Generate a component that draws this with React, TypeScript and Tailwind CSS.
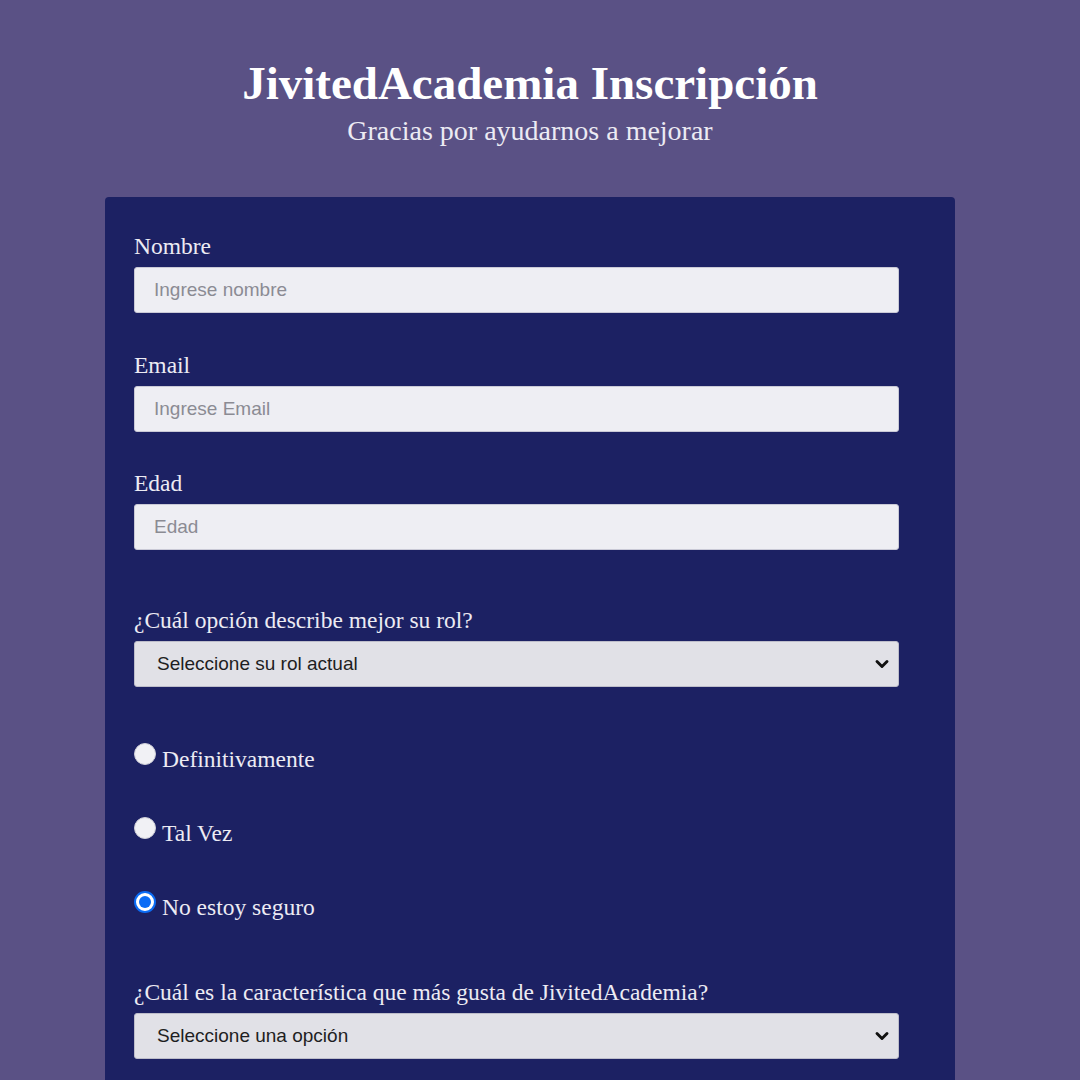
import React, { useState } from 'react';
import { ChevronDown } from 'lucide-react';

const serif = { fontFamily: '"Liberation Serif", "Times New Roman", serif' };

const Field: React.FC<{ label: string; placeholder: string; className?: string }> = ({ label, placeholder, className }) => (
  <div className={className}>
    <label className="block text-[23.5px] leading-[28px] text-[#ecebf3]">{label}</label>
    <input
      placeholder={placeholder}
      className="mt-[7px] block h-[46px] w-[765px] rounded-[3px] border border-[#c9c9d6] bg-[#eeeef3] px-[19px] font-['Liberation_Sans',Arial,sans-serif] text-[19px] text-[#222] placeholder:text-[#8b8b93] outline-none"
    />
  </div>
);

const Select: React.FC<{ label: string; value: string; className?: string }> = ({ label, value, className }) => (
  <div className={className}>
    <label className="block text-[23.5px] leading-[28px] text-[#ecebf3]">{label}</label>
    <div className="relative mt-[7px] h-[46px] w-[765px]">
      <select className="block h-full w-full appearance-none rounded-[3px] border border-[#bdbdca] bg-[#e1e1e7] px-[22px] font-['Liberation_Sans',Arial,sans-serif] text-[19px] text-[#1e1e22] outline-none">
        <option>{value}</option>
      </select>
      <ChevronDown className="pointer-events-none absolute right-[7px] top-[13px] h-[20px] w-[20px] text-[#111]" strokeWidth={3.5} />
    </div>
  </div>
);

const Radio: React.FC<{ label: string; checked: boolean; onClick: () => void }> = ({ label, checked, onClick }) => (
  <div className="flex h-[74px] items-start cursor-pointer" onClick={onClick}>
    <span
      className={`mt-[6px] block h-[22px] w-[22px] shrink-0 rounded-full ${checked ? 'border-[2px] border-[#0b6cf5] bg-white p-[3px]' : 'border border-[#cfcfd8] bg-[#f1f1f5]'}`}
    >
      {checked && <span className="block h-full w-full rounded-full bg-[#0b6cf5]" />}
    </span>
    <span className="ml-[6px] mt-[8px] text-[23.5px] leading-[28px] text-[#ecebf3]">{label}</span>
  </div>
);

export default function App() {
  const [choice, setChoice] = useState(2);
  const options = ['Definitivamente', 'Tal Vez', 'No estoy seguro'];

  return (
    <div className="min-h-[1080px] w-[1080px] overflow-hidden bg-[#5a5185]" style={serif}>
      <header className="pt-[55px] text-center pr-[20px]">
        <h1 className="text-[47px] font-bold leading-[56px] text-white">JivitedAcademia Inscripción</h1>
        <p className="mt-[3px] text-[28px] leading-[34px] text-[#ecebf3]">Gracias por ayudarnos a mejorar</p>
      </header>

      <main className="ml-[105px] mt-[49px] w-[850px] rounded-[4px] bg-[#1c2163] px-[29px] pt-[35px] pb-[40px]">
        <Field label="Nombre" placeholder="Ingrese nombre" />
        <Field label="Email" placeholder="Ingrese Email" className="mt-[38px]" />
        <Field label="Edad" placeholder="Edad" className="mt-[37px]" />
        <Select label="¿Cuál opción describe mejor su rol?" value="Seleccione su rol actual" className="mt-[56px]" />

        <div className="mt-[50px]">
          {options.map((o, i) => (
            <Radio key={o} label={o} checked={choice === i} onClick={() => setChoice(i)} />
          ))}
        </div>

        <Select label="¿Cuál es la característica que más gusta de JivitedAcademia?" value="Seleccione una opción" className="mt-[19px]" />
      </main>
    </div>
  );
}
